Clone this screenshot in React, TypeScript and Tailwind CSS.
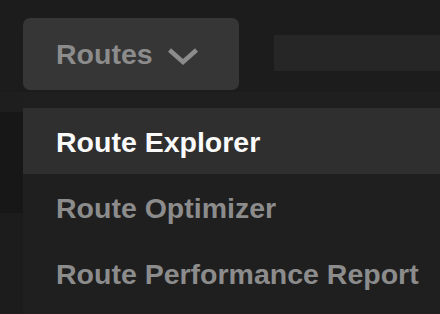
import React from 'react'

const items = ['Route Explorer', 'Route Optimizer', 'Route Performance Report']

function Chevron() {
  return (
    <svg width="32" height="20" viewBox="0 0 32 20" fill="none" className="shrink-0">
      <path d="M2.5 5 L16 17 L29.5 5" stroke="#8c8c8c" strokeWidth="4.5" strokeLinecap="butt" strokeLinejoin="miter" />
    </svg>
  )
}

export default function App() {
  return (
    <div
      className="relative w-[440px] h-[314px] overflow-hidden bg-[#1c1c1c]"
      style={{ fontFamily: '"Liberation Sans", Arial, sans-serif' }}
    >
      {/* top bar */}
      <div className="flex items-start pt-[18px] pl-[23px]">
        <button
          type="button"
          className="flex items-center h-[72px] w-[216px] pl-[33px] pt-[1px] gap-[14px] rounded-[7px] bg-[#363636] text-[28.5px] font-bold text-[#8c8c8c]"
        >
          <span>Routes</span>
          <Chevron />
        </button>
        <div className="ml-[35px] mt-[17px] h-[36px] flex-1 bg-[#262626]" />
      </div>

      {/* page content under the menu */}
      <div className="mt-[2px] h-[20px] bg-[#1e1e1e]" />
      <div className="h-[101px] bg-[#171717]" />

      {/* dropdown */}
      <div className="absolute left-[23px] top-[92px] right-0 bottom-0 bg-[#1f1f1f] pt-[16px]">
        {items.map((label, i) => (
          <div
            key={label}
            className={`flex items-center h-[66px] pl-[33px] pt-[2px] text-[28.5px] font-bold ${
              i === 0 ? 'bg-[#2f2f2f] text-[#fafafa]' : 'text-[#8c8c8c]'
            }`}
          >
            {label}
          </div>
        ))}
      </div>
    </div>
  )
}
